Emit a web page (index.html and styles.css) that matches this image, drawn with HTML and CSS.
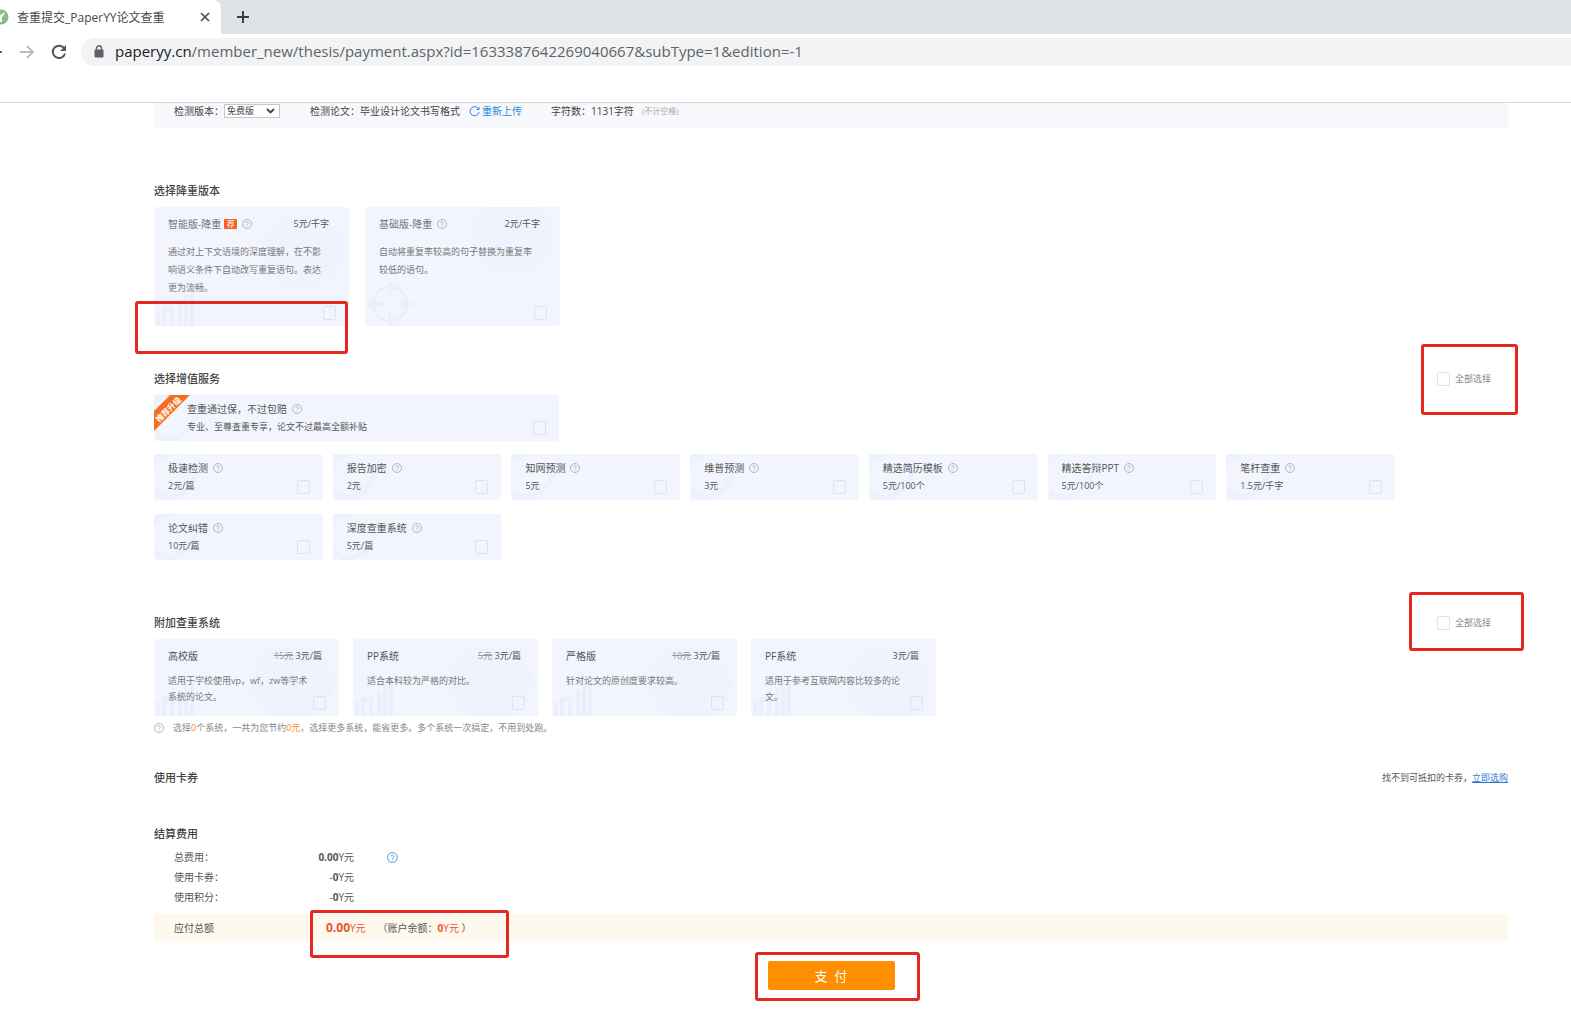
FILE: index.html
```html
<!DOCTYPE html>
<html lang="zh-CN">
<head>
<meta charset="utf-8">
<title>查重提交_PaperYY论文查重</title>
<link rel="stylesheet" href="styles.css">
</head>
<body>
<svg class="sprite" aria-hidden="true">
  <symbol id="help" viewBox="0 0 12 12"><circle cx="6" cy="6" r="5.4" fill="none" stroke="currentColor"/><path d="M4.4 4.8a1.6 1.6 0 1 1 2.5 1.3c-.6.4-.9.6-.9 1.2M6 8.2v1" fill="none" stroke="currentColor"/></symbol>
  <symbol id="bars" viewBox="0 0 44 34"><path d="M4 34V20M10 34V17h8v17M26 34V8M32 34V2M38 34V0" fill="none" stroke="#eaeffb" stroke-width="4"/></symbol>
  <symbol id="target" viewBox="0 0 44 44"><g fill="none" stroke="#e9eefb" stroke-width="3"><circle cx="22" cy="22" r="17"/><path d="M22 0v16M22 28v16M0 22h16M28 22h16"/></g></symbol>
  <symbol id="swirl" viewBox="0 0 50 46"><path d="M0 14C6 4 14 2 26 0H0zM2 34c10 14 34 8 42-28l4 2C44 40 18 54 2 42z" fill="#ebf1fd"/></symbol>
</svg>

<header class="browser">
  <div class="tabstrip">
    <div class="tab">
      <svg class="favicon" viewBox="0 0 9 16"><circle cx="1" cy="8" r="7.5" fill="#86bf86"/><path d="M-2 4l3 4 3-4M1 8v5" fill="none" stroke="#fff" stroke-width="2"/></svg>
      <span class="tab-title">查重提交_PaperYY论文查重</span>
      <button class="icon-btn tab-close" aria-label="关闭"><svg width="10" height="10" viewBox="0 0 10 10"><path d="M1 1l8 8M9 1l-8 8" stroke="#45494d" stroke-width="1.6"/></svg></button>
    </div>
    <button class="icon-btn tab-new" aria-label="新标签页"><svg width="12" height="12" viewBox="0 0 12 12"><path d="M6 0v12M0 6h12" stroke="#3c4043" stroke-width="2"/></svg></button>
  </div>
  <div class="toolbar">
    <svg class="back" viewBox="0 0 2 14"><path d="M0 7h2" stroke="#5f6368" stroke-width="2"/></svg>
    <button class="icon-btn" aria-label="前进"><svg width="14" height="14" viewBox="0 0 14 14"><path d="M0 7h12.5M7 1l6 6-6 6" fill="none" stroke="#b9bbbe" stroke-width="1.8"/></svg></button>
    <button class="icon-btn reload" aria-label="刷新"><svg width="16" height="16" viewBox="0 0 16 16"><path d="M13.3 4.6A6.2 6.2 0 1 0 14 9.5" fill="none" stroke="#54585c" stroke-width="2"/><path d="M15 1v6H9z" fill="#54585c"/></svg></button>
    <div class="address">
      <svg width="10" height="13" viewBox="0 0 10 13"><path d="M1 5h8v7H1z" fill="#5f6368" stroke="#5f6368"/><path d="M2.5 5V3.300a2.500 2.500 0 0 1 5 0V5" fill="none" stroke="#5f6368" stroke-width="1.400"/></svg>
      <span class="url"><span class="host">paperyy.cn</span>/member_new/thesis/payment.aspx?id=1633387642269040667&amp;subType=1&amp;edition=-1</span>
    </div>
  </div>
</header>

<main class="page">
  <div class="info">
    <label for="edition">检测版本：</label>
    <span class="select-wrap"><select id="edition"><option>免费版</option></select><svg width="9" height="6" viewBox="0 0 9 6"><path d="M1 1l3.500 3.500L8 1" fill="none" stroke="#444" stroke-width="1.800"/></svg></span>
    <span class="info-paper">检测论文：</span><span>毕业设计论文书写格式</span>
    <a class="reupload" href="#"><svg width="11" height="11" viewBox="0 0 11 11"><path d="M9.500 3A4.500 4.500 0 1 0 10 6M10 1v2.500H7.500" fill="none" stroke="#2f86e0"/></svg>重新上传</a>
    <span class="info-count">字符数：</span><span>1131字符</span><span class="info-note">(不计空格)</span>
  </div>

  <section class="section reduce">
    <h2>选择降重版本</h2>
    <div class="cards reduce-cards">
      <div class="card">
        <svg class="deco-bars"><use href="#bars"/></svg><i class="deco-disc"></i>
        <div class="card-body">
          <div class="card-head"><label class="name muted" for="r1">智能版-降重</label><span class="badge">荐</span><svg class="help"><use href="#help"/></svg><span class="price">5元/千字</span></div>
          <p>通过对上下文语境的深度理解，在不影响语义条件下自动改写重复语句。表达更为流畅。</p>
        </div>
        <input type="checkbox" id="r1">
      </div>
      <div class="card">
        <svg class="deco-target"><use href="#target"/></svg><i class="deco-disc high"></i>
        <div class="card-body">
          <div class="card-head"><label class="name muted" for="r2">基础版-降重</label><svg class="help"><use href="#help"/></svg><span class="price">2元/千字</span></div>
          <p>自动将重复率较高的句子替换为重复率较低的语句。</p>
        </div>
        <input type="checkbox" id="r2">
      </div>
    </div>
    <i class="mark mark-reduce"></i>
  </section>

  <section class="section services">
    <div class="section-head">
      <h2>选择增值服务</h2>
      <label class="all"><input type="checkbox">全部选择</label>
    </div>
    <div class="card guarantee">
      <svg class="deco-swirl"><use href="#swirl"/></svg>
      <b class="ribbon">推荐升级</b>
      <div class="card-body">
        <div class="card-head"><label class="name" for="g">查重通过保，不过包赔</label><svg class="help"><use href="#help"/></svg></div>
        <div class="cost">专业、至尊查重专享，论文不过最高全额补贴</div>
      </div>
      <input type="checkbox" id="g">
    </div>
    <div class="service-grid">
      <div class="card"><svg class="deco-swirl"><use href="#swirl"/></svg><div class="card-body"><div class="card-head"><label class="name" for="s1">极速检测</label><svg class="help"><use href="#help"/></svg></div><div class="cost">2元/篇</div></div><input type="checkbox" id="s1"></div>
      <div class="card"><svg class="deco-swirl"><use href="#swirl"/></svg><div class="card-body"><div class="card-head"><label class="name" for="s2">报告加密</label><svg class="help"><use href="#help"/></svg></div><div class="cost">2元</div></div><input type="checkbox" id="s2"></div>
      <div class="card"><svg class="deco-swirl"><use href="#swirl"/></svg><div class="card-body"><div class="card-head"><label class="name" for="s3">知网预测</label><svg class="help"><use href="#help"/></svg></div><div class="cost">5元</div></div><input type="checkbox" id="s3"></div>
      <div class="card"><svg class="deco-swirl"><use href="#swirl"/></svg><div class="card-body"><div class="card-head"><label class="name" for="s4">维普预测</label><svg class="help"><use href="#help"/></svg></div><div class="cost">3元</div></div><input type="checkbox" id="s4"></div>
      <div class="card"><svg class="deco-swirl"><use href="#swirl"/></svg><div class="card-body"><div class="card-head"><label class="name" for="s5">精选简历模板</label><svg class="help"><use href="#help"/></svg></div><div class="cost">5元/100个</div></div><input type="checkbox" id="s5"></div>
      <div class="card"><svg class="deco-swirl"><use href="#swirl"/></svg><div class="card-body"><div class="card-head"><label class="name" for="s6">精选答辩PPT</label><svg class="help"><use href="#help"/></svg></div><div class="cost">5元/100个</div></div><input type="checkbox" id="s6"></div>
      <div class="card"><svg class="deco-swirl"><use href="#swirl"/></svg><div class="card-body"><div class="card-head"><label class="name" for="s7">笔杆查重</label><svg class="help"><use href="#help"/></svg></div><div class="cost">1.5元/千字</div></div><input type="checkbox" id="s7"></div>
      <div class="card"><svg class="deco-swirl"><use href="#swirl"/></svg><div class="card-body"><div class="card-head"><label class="name" for="s8">论文纠错</label><svg class="help"><use href="#help"/></svg></div><div class="cost">10元/篇</div></div><input type="checkbox" id="s8"></div>
      <div class="card"><svg class="deco-swirl"><use href="#swirl"/></svg><div class="card-body"><div class="card-head"><label class="name" for="s9">深度查重系统</label><svg class="help"><use href="#help"/></svg></div><div class="cost">5元/篇</div></div><input type="checkbox" id="s9"></div>
    </div>
    <i class="mark mark-services"></i>
  </section>

  <section class="section systems">
    <div class="section-head">
      <h2>附加查重系统</h2>
      <label class="all"><input type="checkbox">全部选择</label>
    </div>
    <div class="cards system-cards">
      <div class="card"><svg class="deco-bars"><use href="#bars"/></svg><i class="deco-disc"></i><div class="card-body"><div class="card-head"><label class="name" for="y1">高校版</label><span class="price"><del>15元</del> 3元/篇</span></div><p>适用于学校使用vp，wf，zw等学术系统的论文。</p></div><input type="checkbox" id="y1"></div>
      <div class="card"><svg class="deco-bars"><use href="#bars"/></svg><i class="deco-disc"></i><div class="card-body"><div class="card-head"><label class="name" for="y2">PP系统</label><span class="price"><del>5元</del> 3元/篇</span></div><p>适合本科较为严格的对比。</p></div><input type="checkbox" id="y2"></div>
      <div class="card"><svg class="deco-bars"><use href="#bars"/></svg><i class="deco-disc"></i><div class="card-body"><div class="card-head"><label class="name" for="y3">严格版</label><span class="price"><del>10元</del> 3元/篇</span></div><p>针对论文的原创度要求较高。</p></div><input type="checkbox" id="y3"></div>
      <div class="card"><svg class="deco-bars"><use href="#bars"/></svg><i class="deco-disc"></i><div class="card-body"><div class="card-head"><label class="name" for="y4">PF系统</label><span class="price">3元/篇</span></div><p>适用于参考互联网内容比较多的论文。</p></div><input type="checkbox" id="y4"></div>
    </div>
    <div class="saving"><svg class="help"><use href="#help"/></svg><span>选择<em>0</em>个系统，一共为您节约<em>0元</em>，选择更多系统，能省更多。多个系统一次搞定，不用到处跑。</span></div>
    <i class="mark mark-systems"></i>
  </section>

  <section class="section coupon">
    <div class="section-head">
      <h2>使用卡券</h2>
      <span class="coupon-tip">找不到可抵扣的卡券，<a href="#">立即选购</a></span>
    </div>
  </section>

  <section class="section bill">
    <h2>结算费用</h2>
    <table>
      <tr><th scope="row">总费用：</th><td><b>0.00</b>Y元</td><td class="bill-help"><svg class="help"><use href="#help"/></svg></td></tr>
      <tr><th scope="row">使用卡券：</th><td>-<b>0</b>Y元</td><td></td></tr>
      <tr><th scope="row">使用积分：</th><td>-<b>0</b>Y元</td><td></td></tr>
    </table>
    <div class="total">
      <span class="total-label">应付总额</span>
      <span class="due"><b>0.00</b>Y元</span>
      <span class="balance">（账户余额：<span class="due-small"><b>0</b>Y元</span> ）</span>
      <i class="mark mark-total"></i>
    </div>
    <div class="pay-row">
      <div class="pay-wrap"><button class="pay">支&nbsp; 付</button><i class="mark mark-pay"></i></div>
    </div>
  </section>
</main>
</body>
</html>
```
FILE: styles.css
```css
* { box-sizing: border-box; }

body {
  margin: 0;
  background: #fff;
  color: #555;
  font: 10px/16px "Open Sans", "Noto Sans CJK SC", sans-serif;
}

h2, p { margin: 0; }
h2 { font-size: 11px; line-height: 18px; font-weight: 500; color: #444; }
button, select, input { font-family: inherit; margin: 0; }
.sprite { position: absolute; width: 0; height: 0; }

/* Browser frame */
.browser { height: 103px; border-bottom: 1px solid #d5d7da; }
.tabstrip { display: flex; height: 34px; background: #dee1e6; }
.tab {
  display: flex;
  align-items: center;
  width: 221px;
  background: #fff;
  border-radius: 0 8px 0 0;
  font-size: 12px;
  color: #45494d;
}
.tab-title { line-height: 18px; padding-top: 2px; }
.favicon { width: 9px; height: 16px; margin-right: 8px; }
.icon-btn { display: flex; align-items: center; padding: 0; border: 0; background: none; }
.tab-close { margin-left: auto; margin-right: 11px; }
.tab-new { margin-left: 16px; }
.toolbar { display: flex; align-items: center; height: 36px; }
.back { width: 2px; height: 14px; margin-right: 18px; }
.reload { margin-left: 17px; }
.address {
  display: flex;
  align-items: center;
  flex: 1;
  height: 28px;
  margin-left: 14px;
  padding: 0 0 2px 13px;
  gap: 11px;
  background: #f1f3f4;
  border-radius: 14px 0 0 14px;
}
.url { font-size: 15px; line-height: 20px; color: #5f6368; white-space: nowrap; }
.host { color: #202124; }

/* Page */
.page { margin: 0 63px 0 154px; padding-bottom: 21px; }
.info {
  display: flex;
  align-items: flex-start;
  height: 25px;
  padding-left: 20px;
  background: #f7f8fb;
  color: #444;
  white-space: nowrap;
}
.select-wrap { display: flex; align-items: center; position: relative; height: 14px; margin-top: 1px; }
.select-wrap svg { position: absolute; right: 5px; pointer-events: none; }
.select-wrap select {
  appearance: none;
  width: 56px;
  height: 14px;
  padding: 0 2px;
  border: 1px solid #c8c8c8;
  background: #fff;
  color: #444;
  font-size: 9px;
  line-height: 12px;
}
.info-paper { margin-left: 30px; }
.reupload { display: flex; align-items: center; gap: 2px; margin-left: 9px; color: #2f86e0; text-decoration: none; }
.info-count { margin-left: 29px; }
.info-note { margin-left: 8px; color: #aaa; font-size: 8px; }

.section { position: relative; }
.section-head { display: flex; justify-content: space-between; line-height: 18px; }
.reduce { margin-top: 54px; }
.services { margin-top: 44px; }
.systems { margin-top: 54px; }
.coupon { margin-top: 33px; }
.bill { margin-top: 38px; }

input[type="checkbox"] {
  appearance: none;
  width: 13px;
  height: 14px;
  border: 1px solid #dde3ec;
  border-radius: 2px;
}
.all { display: flex; align-items: center; gap: 5px; margin-right: 17px; font-size: 9px; color: #888; }

/* Cards */
.card {
  display: grid;
  position: relative;
  overflow: hidden;
  isolation: isolate;
  background: #f2f5fd;
  border-radius: 3px;
}
.card-body { grid-area: 1 / 1; padding: 9px 14px 0; }
.card > input { grid-area: 1 / 1; place-self: end; margin: 0 13px 6px 0; }
.card-head { display: flex; align-items: center; height: 16px; }
.name { color: #555; }
.muted { color: #777; }
.price { margin-left: auto; font-size: 9px; }
.price del { color: #999; }
.card p { font-size: 9px; color: #777; }
.help { width: 10px; height: 10px; margin-left: 5px; color: #a5abb5; }
.badge {
  width: 13px;
  height: 10px;
  margin-left: 3px;
  background: #f2621d;
  color: #fff;
  font-size: 8px;
  line-height: 10px;
  text-align: center;
  border-radius: 1px;
}
.deco-bars, .deco-target, .deco-swirl, .deco-disc { position: absolute; z-index: -1; }
.deco-bars { left: 0; bottom: 0; width: 44px; height: 34px; }
.deco-target { left: 3px; bottom: 0; width: 44px; height: 44px; }
.deco-swirl { left: 0; top: 0; width: 50px; height: 46px; }
.deco-disc { right: 5px; top: 6px; width: 84px; height: 76px; border-radius: 50%; background: #eff3fd; }
.deco-disc.high { top: -8px; }

.cards { display: flex; margin-top: 7px; }
.reduce-cards { gap: 16px; }
.reduce-cards .card { width: 195px; height: 119px; }
.reduce-cards .card-head { padding-right: 6px; }
.reduce-cards p { margin-top: 11px; padding-right: 10px; line-height: 18px; }

.guarantee { width: 405px; height: 46px; margin-top: 7px; }
.services .card-body { padding-top: 6px; }
.guarantee .card-body { padding-left: 33px; }
.cost { font-size: 9px; line-height: 20px; }
.ribbon {
  position: absolute;
  left: -17px;
  top: 6px;
  width: 60px;
  padding: 4px 0 1px;
  background: #f2701f;
  color: #fff;
  font-size: 8px;
  line-height: 9px;
  text-align: center;
  transform: rotate(-45deg);
}
.service-grid {
  display: grid;
  grid-template-columns: repeat(7, 1fr);
  gap: 14px 10px;
  margin-top: 13px;
  padding-right: 113px;
}
.service-grid .card { height: 46px; }

.system-cards { gap: 14px; }
.system-cards .card { width: 185px; height: 77px; }
.system-cards .card-head { padding-right: 3px; }
.system-cards p { margin-top: 9px; padding-right: 14px; }
.saving { display: flex; align-items: center; gap: 9px; margin-top: 4px; font-size: 9px; color: #888; }
.saving .help { margin-left: 0; }
.saving em { font-style: normal; color: #ff8a1e; }

.coupon-tip { font-size: 9px; }
.coupon-tip a { color: #2f78d0; }

/* Bill */
.bill table { margin: 4px 0 0 20px; border-collapse: collapse; line-height: 20px; }
.bill th { width: 90px; padding: 0; font-weight: 400; text-align: left; }
.bill td { width: 90px; height: 20px; padding: 0; text-align: right; }
.bill .bill-help { width: 44px; }
.bill table .help { display: block; width: 11px; height: 11px; margin: 0 0 0 33px; color: #3d93dd; }
.total {
  display: flex;
  align-items: center;
  position: relative;
  height: 27px;
  margin-top: 7px;
  padding-left: 20px;
  background: #fff8ef;
}
.total-label { width: 152px; }
.due, .due-small { color: #e4572e; }
.due b { font-size: 12px; }
.balance { margin-left: 12px; }
.pay-row { display: flex; justify-content: center; margin-top: 20px; }
.pay-wrap { position: relative; }
.pay {
  display: block;
  width: 127px;
  height: 29px;
  padding: 0;
  border: 0;
  border-radius: 2px;
  background: #ff8f00;
  color: #fff;
  font-size: 13px;
}

/* Hand-drawn highlight frames over the page */
.mark { position: absolute; border: 3px solid #e5281f; border-radius: 3px; pointer-events: none; }
.mark-reduce { left: -19px; top: 119px; width: 213px; height: 53px; }
.mark-services { right: -10px; top: -26px; width: 97px; height: 71px; }
.mark-systems { right: -16px; top: -22px; width: 115px; height: 59px; }
.mark-total { left: 156px; top: -4px; width: 199px; height: 48px; }
.mark-pay { left: -13px; top: -9px; width: 165px; height: 49px; }
```
